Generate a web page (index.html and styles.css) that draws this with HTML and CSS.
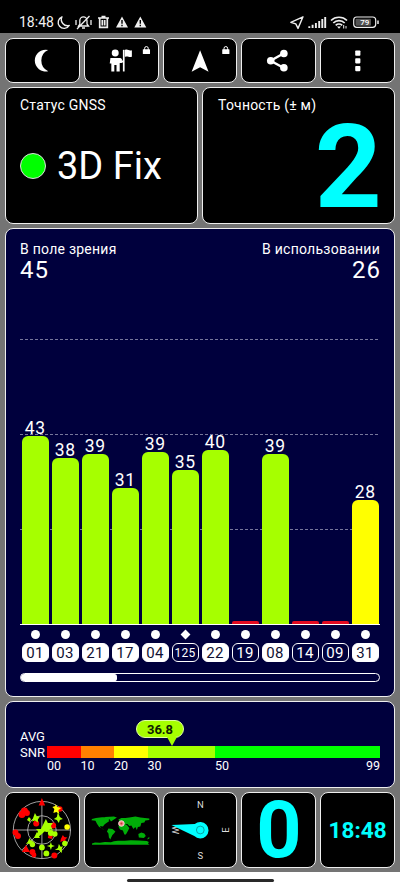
FILE: index.html
```html
<!DOCTYPE html>
<html lang="ru">
<head>
<meta charset="utf-8">
<title>GNSS</title>
<link rel="stylesheet" href="styles.css">
</head>
<body>
<header class="status">
  <span class="status-time">18:48</span>
  <svg class="status-left" width="94" height="20" viewBox="55 13 94 20" fill="none" stroke="#eee" stroke-width="1.4">
    <path d="M62 16.800a6 6 0 1 0 7.300 8.700 6.200 6.200 0 0 1-7.300-8.700z" stroke-linejoin="round"/>
    <path d="M78.500 26h10l-1.500-2v-3.500a3.600 3.600 0 0 0-7.200 0V24zM82 28h3M77 29l12.500-13M76 20v5M91 20v5" stroke-width="1.300"/>
    <path d="M98 18h11M101.500 16.500h4M99.700 18v9.300h7.600V18M102.300 20v5.500M104.700 20v5.500" stroke-width="1.700"/>
    <path d="M122 16.500l6 11h-12zM140.300 16.500l6 11h-12z" fill="#eee" stroke="none"/>
    <path d="M122 20v3.800M122 24.800v1.400M140.300 20v3.800M140.300 24.800v1.400" stroke="#000"/>
  </svg>
  <svg class="status-right" width="92" height="20" viewBox="288 13 92 20" fill="none" stroke="#eee" stroke-width="1.400">
    <path d="M303 16.800l-12.200 5.500 5 1.600 2.200 4.500z" stroke-linejoin="round"/>
    <path d="M309.300 28v-1.800M312.600 28v-3.300M315.900 28v-5M319.200 28v-7M322.300 28v-9M325.200 28V17" stroke-width="1.900"/>
    <path d="M331 20.500a11.500 11.500 0 0 1 16 0M333.300 23a8 8 0 0 1 11.400 0M335.700 25.400a4.800 4.800 0 0 1 6.500 0" stroke-width="1.700"/>
    <path d="M337 26.500h4l-2 2.300z" fill="#eee" stroke="none"/>
    <path d="M343.700 25v3.500M346 26v2.500" stroke-width="1"/>
    <rect x="353.700" y="17" width="22" height="10.300" rx="3" stroke-width="1.200"/>
    <rect x="355.500" y="18.700" width="15.500" height="7" rx="1" fill="#555" stroke="none"/>
    <path d="M378 20.500v3.500" stroke-width="1.500"/>
    <text x="364.800" y="25.300" class="battery-text">79</text>
  </svg>
</header>

<main class="app">
  <nav class="row five toolbar">
    <button class="tile" aria-label="Night"><svg viewBox="6 39 73 43"><path fill="#fff" d="M48.300 50A10.900 10.900 0 1 0 48.300 71.200 11.600 11.600 0 0 1 48.300 50z"/></svg></button>
    <button class="tile" aria-label="Guide"><svg viewBox="85 39 73 43" fill="#fff"><circle cx="115.300" cy="53" r="3.500"/><path d="M110.500 58h10l1.500 1v4h-2.200v8.500h-3.200V65h-2.200v6.500h-3V63.500h-1.600z"/><path d="M123 49.800h1.700v21.700H123z"/><path d="M125 50c3-1.500 4 1.500 7 .2v6.500c-3 1.300-4-1.400-7 .2z"/><path d="M119 60.500h5v2h-5z"/><rect x="143" y="49.300" width="7.200" height="4.700" rx=".5"/><path d="M144.800 50v-1.700a1.800 1.800 0 0 1 3.600 0V50" fill="none" stroke="#fff"/></svg></button>
    <button class="tile" aria-label="Navigate"><svg viewBox="163.600 39 73 43" fill="#fff"><path d="M199.800 50.200l8.500 21.500-8.500-4.500-8.500 4.500z"/><rect x="222" y="49.300" width="7.200" height="4.700" rx=".5"/><path d="M223.800 50v-1.700a1.800 1.800 0 0 1 3.600 0V50" fill="none" stroke="#fff"/></svg></button>
    <button class="tile" aria-label="Share"><svg viewBox="242 39 73 43" fill="#fff"><path d="M284 53.300L270.700 60.700l13.300 7.300" fill="none" stroke="#fff" stroke-width="2.400"/><circle cx="284" cy="53.500" r="3.800"/><circle cx="270.800" cy="60.700" r="3.800"/><circle cx="284" cy="67.800" r="3.800"/></svg></button>
    <button class="tile" aria-label="Menu"><svg viewBox="321 39 73 43" fill="#fff"><rect x="355.300" y="50.500" width="5.200" height="5.200" rx=".8"/><rect x="355.300" y="58.200" width="5.200" height="5.200" rx=".8"/><rect x="355.300" y="66" width="5.200" height="5.200" rx=".8"/></svg></button>
  </nav>

  <section class="row two">
    <div class="tile card status-card">
      <div class="label">Статус GNSS</div>
      <div class="fix"><span class="led"></span><span class="fix-text">3D Fix</span></div>
    </div>
    <div class="tile card">
      <div class="label">Точность (± м)</div>
      <div class="accuracy">2</div>
    </div>
  </section>

  <section class="tile panel sats">
    <div class="counts">
      <div><div class="label">В поле зрения</div><div class="count">45</div></div>
      <div class="right"><div class="label">В использовании</div><div class="count">26</div></div>
    </div>
    <div class="chart">
      <div class="col"><span>43</span><i class="bar h43"></i></div>
      <div class="col"><span>38</span><i class="bar h38"></i></div>
      <div class="col"><span>39</span><i class="bar h39"></i></div>
      <div class="col"><span>31</span><i class="bar h31"></i></div>
      <div class="col"><span>39</span><i class="bar h39b"></i></div>
      <div class="col"><span>35</span><i class="bar h35"></i></div>
      <div class="col"><span>40</span><i class="bar h40"></i></div>
      <div class="col"><i class="bar none"></i></div>
      <div class="col"><span>39</span><i class="bar h39"></i></div>
      <div class="col"><i class="bar none"></i></div>
      <div class="col"><i class="bar none"></i></div>
      <div class="col"><span>28</span><i class="bar h28"></i></div>
    </div>
    <div class="ids">
      <div class="sat"><i class="dot"></i><b class="used">01</b></div>
      <div class="sat"><i class="dot"></i><b class="used">03</b></div>
      <div class="sat"><i class="dot"></i><b class="used">21</b></div>
      <div class="sat"><i class="dot"></i><b class="used">17</b></div>
      <div class="sat"><i class="dot"></i><b class="used">04</b></div>
      <div class="sat"><i class="dot diamond"></i><b class="small">125</b></div>
      <div class="sat"><i class="dot"></i><b class="used">22</b></div>
      <div class="sat"><i class="dot"></i><b>19</b></div>
      <div class="sat"><i class="dot"></i><b class="used">08</b></div>
      <div class="sat"><i class="dot"></i><b>14</b></div>
      <div class="sat"><i class="dot"></i><b>09</b></div>
      <div class="sat"><i class="dot"></i><b class="used">31</b></div>
    </div>
    <div class="scroll"><div class="thumb"></div></div>
  </section>

  <section class="tile panel snr">
    <div class="snr-label">AVG<br>SNR</div>
    <div class="meter">
      <div class="bubble">36.8</div>
      <div class="scale"><i class="red"></i><i class="orange"></i><i class="yellow"></i><i class="lime"></i><i class="green"></i></div>
      <div class="ticks"><span>00</span><span>10</span><span>20</span><span>30</span><span>50</span><span>99</span></div>
    </div>
  </section>

  <section class="row five bottom">
    <div class="tile"><svg viewBox="6 793 73 74">
      <g fill="none" stroke="#c8c8c8" stroke-width=".8"><circle cx="42" cy="830" r="28.700"/><circle cx="42" cy="830" r="14.300"/><path d="M13 830h58M42 801v58M42 830l-20 20"/></g>
      <g fill="#f00"><path d="M42 798l3.300 7.500h-6.600zM26 845l4 7h-8z"/><circle cx="24.500" cy="811" r="3.500"/><circle cx="22" cy="814.500" r="3.500"/><circle cx="27" cy="813" r="3"/><circle cx="15.500" cy="832.500" r="3"/><circle cx="18" cy="836" r="3"/><circle cx="36.300" cy="823.500" r="3"/><circle cx="53.300" cy="825.500" r="3"/><circle cx="32.500" cy="852" r="3"/><circle cx="34" cy="855" r="2.500"/><circle cx="54.500" cy="855.500" r="3"/><circle cx="60" cy="809" r="2.700"/><path d="M63 835l1.500 2 3 .5-2 2 .5 3-3-1.500-2.500 1 .5-3zM49 833l4 3-1 3-4-1z"/></g>
      <g fill="#a6ff00"><circle cx="42" cy="847.500" r="2.900"/><circle cx="46.500" cy="853.500" r="2.900"/><circle cx="32.500" cy="844.500" r="2.700"/><circle cx="51" cy="833" r="3"/><circle cx="55" cy="834" r="2.700"/><circle cx="65" cy="843.500" r="2.700"/><circle cx="47" cy="829" r="3"/><path d="M58 812l2 5 3 2-3 1-1 3-2-3-3-1 3-2zM35 813l2 3.500h3l-2 3 0 3-3-2-3 1 1-3zM29 817l2 2-1 3-3-2zM46 819l2 4 5 0-2 3 2 4-5-1-4 3-2 2-5 4 1-7-2-2 5 0zM37 832l3 6h-6zM29.500 838l1.500 2.500 3 .5-2.500 1.500-.5 3-2-2-3 .5 2-2.500zM51 842l1 3 3 1-3 1-1 3-1-3-3-1 3-1zM59 844l2 3 2-1-1 3 0 4-3-3-4 0 3-2z"/></g>
      <g fill="#ff0"><circle cx="67.300" cy="827" r="2.800"/><path d="M55.500 804l2 3 4 1-3 2 1 4-3-2-3 1 1-4-2-2 3-1z"/></g>
    </svg></div>
    <div class="tile"><svg viewBox="85 793 73 74">
      <g fill="#00ad08"><path d="M92 819l4-1 6-.8 5 0 3 1.500-1.500 1.300 1 1-3 2-2 1.500-1.500 2-3-.5 1 2 3 1.500-1-.3-4-2.500-2-3-1.500-3-4-.5zM105 817l9-.5 3 1-3 2-3 2-1.500-2.500zM108.500 828.500l4 .5 3 2.500-1.500 2-1.500 1.500-1.500 3-.5 1.500-1.500-2-.5-4-1.500-2zM119.500 821l-1-1.500 3-1.500 4 0 4-.5 6-1 5 1 9 1v1.500l-4 .5-1 2-3 .5-1 3.500-2.500.5-1 3-1.500-3-2 2-2-3.500-2 .5-2-2-5 0-3-1zM120 824l4-.5 3 1.500 2.500 3-1.500 3-2 3.500-1.500 0-1.500-4-3-1-1.500-3zM138.500 834l3-1.500 3 1 1.500 2.500-2 2-5-.5zM148 838l1.500-1v1.500l-2 1zM92 843.500l3-1 5 .3 5-.8 6 .2 3-1 4-.5 7 0 6-.5 8 .3 8 .5 2 1-.8 1.800 1.500 1H92z"/></g>
      <circle cx="121.500" cy="823.500" r="2.800" fill="#ff8b86" stroke="#f0d6d6"/><circle cx="121.500" cy="823.500" r="1" fill="#b64040"/>
    </svg></div>
    <div class="tile"><svg viewBox="163.600 793 73 74">
      <g class="compass"><text x="200" y="808">N</text><text x="200" y="859">S</text><text transform="translate(228.500 830) rotate(-90)" x="0" y="0">E</text><text transform="translate(171.500 830) rotate(90)" x="0" y="0">W</text></g>
      <path d="M171 825l23.500-1A8.300 8.300 0 1 1 194 836z" fill="#0ff"/><circle cx="200" cy="830" r="3.900" fill="none" stroke="#087d80" stroke-width=".7"/>
    </svg></div>
    <div class="tile speed">0</div>
    <div class="tile clock">18:48</div>
  </section>
</main>
<footer class="navbar"><div class="handle"></div></footer>
</body>
</html>
```
FILE: styles.css
```css
* { box-sizing: border-box; }
body { margin: 0; width: 400px; height: 889px; overflow: hidden; background: #fff; color: #fff; font-family: Roboto, sans-serif; font-size: 14px; }
svg { display: block; flex: none; }
.status { height: 33px; padding-left: 19px; background: #000; display: flex; align-items: flex-start; color: #f2f2f2; }
.status-time { width: 36px; margin-top: 12px; font-size: 14px; line-height: 20px; white-space: nowrap; }
.status-left { margin-top: 13px; }
.status-right { margin: 13px 0 0 139px; }
.battery-text { fill: #fff; stroke: none; font-size: 8px; font-weight: 500; text-anchor: middle; }
.app { height: 839px; padding: 5px; background: #747474; display: grid; grid-template-rows: 45px 137px 469px 87px 76px; gap: 4px; }
.row { display: grid; gap: 4px; min-height: 0; }
.five { grid-template-columns: repeat(5, minmax(0, 1fr)); }
.two { grid-template-columns: repeat(2, minmax(0, 1fr)); }
.tile { min-width: 0; min-height: 0; margin: 0; padding: 0; border: 1px solid #eee; border-radius: 8px; background: #000; color: #fff; font-family: inherit; }
.tile > svg { width: 100%; height: 100%; }
.card { padding: 7px 15px 0; }
.status-card { padding-left: 14px; }
.label { font-size: 14px; line-height: 20px; letter-spacing: .25px; white-space: nowrap; }
.card .label { letter-spacing: .2px; }
.fix { height: 48px; margin-top: 27px; display: flex; align-items: center; gap: 11px; }
.led { width: 26px; height: 26px; border: 1px solid #ddd; border-radius: 50%; background: #0f0; }
.fix-text { font-size: 38px; line-height: 48px; white-space: nowrap; }
.accuracy { margin-top: -8px; color: #0ff; font-size: 117px; line-height: 120px; font-weight: 700; text-align: right; margin-right: -3px; }
.panel { background: #00003d; }
.sats { padding: 10px 14px 0; }
.counts { height: 46px; display: flex; justify-content: space-between; }
.right { text-align: right; }
.count { font-size: 24px; line-height: 23px; letter-spacing: 1px; }
.right .count { margin-right: -1px; }
.chart { height: 340px; border-bottom: 1px solid #fff; display: grid; grid-template-columns: repeat(12, 1fr);
  background: repeating-linear-gradient(90deg, #77779b 0 3px, transparent 3px 5px) 0 54px / 100% 1px no-repeat,
    repeating-linear-gradient(90deg, #77779b 0 3px, transparent 3px 5px) 0 149px / 100% 1px no-repeat,
    repeating-linear-gradient(90deg, #77779b 0 3px, transparent 3px 5px) 0 244px / 100% 1px no-repeat; }
.col { display: flex; flex-direction: column; justify-content: flex-end; align-items: center; }
.col span { font-size: 17.5px; line-height: 15px; letter-spacing: .6px; margin-right: -.6px; }
.bar { display: block; width: 27px; border-radius: 6px 6px 0 0; background: #a6ff00; }
.h43 { height: 188px; }
.h38 { height: 166px; }
.h39 { height: 170px; }
.h31 { height: 136px; }
.h39b { height: 172px; }
.h35 { height: 154px; }
.h40 { height: 174px; }
.h28 { height: 124px; background: #ff0; }
.none { height: 3px; border-radius: 2px 2px 0 0; background: #e40b20; }
.ids { height: 38px; padding-top: 5px; display: grid; grid-template-columns: repeat(12, 1fr); }
.sat { display: flex; flex-direction: column; align-items: center; gap: 4px; }
.dot { width: 9px; height: 9px; border-radius: 50%; background: #fff; }
.diamond { width: 7px; height: 7px; margin: 1px; border-radius: 0; transform: rotate(45deg); }
.sat b { width: 27px; height: 19px; border: 1px solid #fff; border-radius: 6px; text-align: center; font-size: 15px; line-height: 18px; font-weight: 400; letter-spacing: .3px; }
.sat .used { background: #fff; color: #111133; }
.sat .small { font-size: 12px; }
.scroll { height: 9px; margin-top: 10px; border: 1px solid #fff; border-radius: 5px; }
.thumb { width: 96px; height: 7px; border-radius: 4px 3px 3px 4px; background: #fff; }
.snr { display: flex; padding: 0 14px; }
.snr-label { width: 27px; padding: 27px 0 0; font-size: 13px; line-height: 16px; white-space: nowrap; }
.meter { position: relative; width: 333px; padding-top: 44px; }
.bubble { position: absolute; left: 89px; top: 18px; width: 48px; height: 18px; border: 1px solid #dfffa0; border-radius: 9px; background: #a6ff00; color: #102000; font-size: 13px; line-height: 17px; font-weight: 700; text-align: center; }
.bubble::after { content: ""; position: absolute; left: 30px; top: 16px; border: solid transparent; border-width: 9px 5px 0; border-top-color: #a6ff00; }
.scale, .ticks { display: grid; grid-template-columns: 33.5px 33.5px 33.5px 67.5px 1fr; }
.scale { height: 12px; }
.red { background: #f00; }
.orange { background: #ff8000; }
.yellow { background: #ff0; }
.lime { background: #a6ff00; }
.green { background: #0f0; }
.ticks { grid-template-columns: 33.5px 33.5px 33.5px 67.5px 1fr auto; font-size: 12.5px; line-height: 16px; }
.compass { fill: #ddd; font-size: 9.5px; text-anchor: middle; }
.speed { color: #0ff; font-size: 79px; line-height: 75px; font-weight: 700; text-align: center; }
.clock { color: #0ff; font-size: 22.5px; line-height: 74px; font-weight: 700; text-align: center; white-space: nowrap; }
.navbar { height: 17px; padding-top: 7px; background: #fff; }
.handle { width: 147px; height: 3px; margin: 0 auto; border-radius: 2px; background: #292929; }
```
